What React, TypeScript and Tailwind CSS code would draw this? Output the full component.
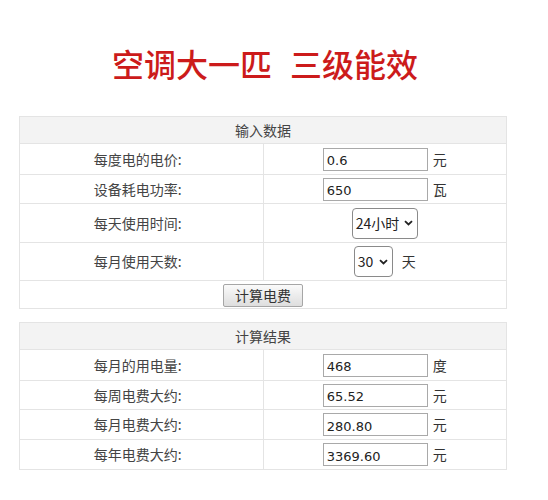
import React from 'react';

const cjk = { fontFamily: '"Noto Sans CJK SC", "Noto Sans", sans-serif' };

const Field: React.FC<{ value: string; unit: string }> = ({ value, unit }) => (
  <div className="flex items-center justify-center gap-[5px]">
    <input
      readOnly
      value={value}
      className="w-[105px] h-[23px] border border-[#a9a9a9] bg-white px-[3px] pt-[3px] text-[13px] text-[#222] outline-none font-['DejaVu_Sans',sans-serif]"
    />
    <span className="w-[14px] text-[14px] text-[#333]">{unit}</span>
  </div>
);

const Select: React.FC<{ value: string; width: string }> = ({ value, width }) => (
  <span
    className={`inline-flex h-[31px] items-center justify-between rounded-[4px] border border-[#8a8a8a] bg-white pl-[3px] pr-[4px] text-[14px] text-[#222] ${width}`}
  >
    {value}
    <svg width="9" height="6" viewBox="0 0 9 6" className="ml-[3px]">
      <path d="M1 1.2l3.5 3.3L8 1.2" fill="none" stroke="#222" strokeWidth="1.8" />
    </svg>
  </span>
);

const Row: React.FC<{ label: string; h: string; children: React.ReactNode }> = ({ label, h, children }) => (
  <tr className={h}>
    <td className="w-[244px] border border-[#e4e4e4] pr-[7px] text-center text-[14px] text-[#444]">{label}</td>
    <td className="border border-[#e4e4e4] text-center">{children}</td>
  </tr>
);

const Header: React.FC<{ title: string }> = ({ title }) => (
  <tr className="h-[27px]">
    <th colSpan={2} className="border border-[#e4e4e4] bg-[#f3f3f3] text-center text-[14px] font-normal text-[#444]">
      {title}
    </th>
  </tr>
);

export default function App() {
  return (
    <div className="w-[548px] h-[500px] bg-white" style={cjk}>
      <div className="flex h-[50px] items-center justify-center pt-[38px] pr-[18px] box-content text-[32px] font-medium text-[#cc1b1b] leading-none">
        <span>空调大一匹</span>
        <span className="ml-[18px]">三级能效</span>
      </div>

      <div className="mt-[28px] ml-[19px] w-[488px]">
        <table className="w-full border-collapse border border-[#e4e4e4] table-fixed">
          <tbody>
            <Header title="输入数据" />
            <Row label="每度电的电价:" h="h-[31px]">
              <Field value="0.6" unit="元" />
            </Row>
            <Row label="设备耗电功率:" h="h-[29px]">
              <Field value="650" unit="瓦" />
            </Row>
            <Row label="每天使用时间:" h="h-[39px]">
              <div className="flex justify-center">
                <Select value="24小时" width="w-[66px]" />
              </div>
            </Row>
            <Row label="每月使用天数:" h="h-[38px]">
              <div className="flex items-center justify-center gap-[9px]">
                <Select value="30" width="w-[39px]" />
                <span className="text-[14px] text-[#333]">天</span>
              </div>
            </Row>
            <tr className="h-[28px]">
              <td colSpan={2} className="border border-[#e4e4e4] text-center">
                <button className="h-[23px] w-[80px] rounded-[2px] border border-[#a6a6a6] bg-gradient-to-b from-[#fafafa] to-[#dedede] text-[14px] text-[#333]">
                  计算电费
                </button>
              </td>
            </tr>
          </tbody>
        </table>

        <table className="mt-[13px] w-full border-collapse border border-[#e4e4e4] table-fixed">
          <tbody>
            <Header title="计算结果" />
            <Row label="每月的用电量:" h="h-[31px]">
              <Field value="468" unit="度" />
            </Row>
            <Row label="每周电费大约:" h="h-[29px]">
              <Field value="65.52" unit="元" />
            </Row>
            <Row label="每月电费大约:" h="h-[30px]">
              <Field value="280.80" unit="元" />
            </Row>
            <Row label="每年电费大约:" h="h-[30px]">
              <Field value="3369.60" unit="元" />
            </Row>
          </tbody>
        </table>
      </div>
    </div>
  );
}
